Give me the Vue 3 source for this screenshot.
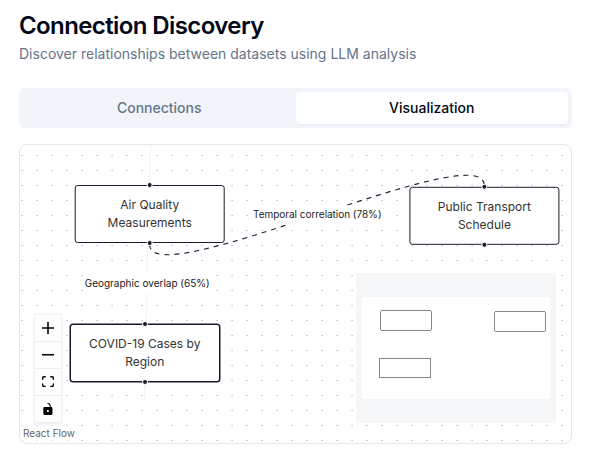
<script setup>
const nodes = [
  { id: 'air', lines: ['Air Quality', 'Measurements'] },
  { id: 'transport', lines: ['Public Transport', 'Schedule'] },
  { id: 'covid', lines: ['COVID-19 Cases by', 'Region'] },
]
</script>

<template>
  <main class="page">
    <h1>Connection Discovery</h1>
    <p class="subtitle">Discover relationships between datasets using LLM analysis</p>
    <div class="tabs" role="tablist">
      <button role="tab">Connections</button>
      <button role="tab" class="active">Visualization</button>
    </div>
    <section class="flow">
      <svg class="layer" width="551" height="298" viewBox="20 145 551 298">
        <defs>
          <pattern id="dots" x="21" y="155" width="15" height="15" patternUnits="userSpaceOnUse">
            <rect x=".3" width="1.7" height="1" fill="#c4c4c6" />
          </pattern>
        </defs>
        <rect x="20" y="145" width="551" height="298" fill="url(#dots)" />
        <path class="faint thin" d="M150.500 145V153" />
        <path class="faint" d="M149.700 153V183M144.700 384V401.500M147.700 245L146.200 323" />
        <path class="dashed" d="M149.700 244.500C149.700 296 484.300 134 484.300 185.500" />
        <rect x="251" y="205.500" width="132" height="19" fill="#fff" />
        <rect x="83" y="273.500" width="128" height="20" fill="#fff" />
        <text x="317.300" y="218" text-anchor="middle" textLength="128.500">Temporal correlation (78%)</text>
        <text x="147.200" y="287" text-anchor="middle" textLength="125">Geographic overlap (65%)</text>
      </svg>
      <div v-for="node in nodes" :key="node.id" class="node" :class="node.id">
        <i class="handle top"></i>
        <span v-for="line in node.lines" :key="line">{{ line }}</span>
        <i class="handle bottom"></i>
      </div>
      <svg class="minimap" width="200" height="150" viewBox="356 273 200 150">
        <rect x="356" y="273" width="200" height="150" fill="#f4f6f8" />
        <rect x="362" y="297" width="188" height="102" fill="#fff" />
        <g fill="#fff" stroke="#858585" shape-rendering="crispEdges">
          <rect x="380.500" y="310.500" width="51" height="20" rx="1.700" />
          <rect x="494.500" y="311.500" width="51" height="20" rx="1.700" />
          <rect x="379.500" y="358.500" width="51" height="19" rx="1" />
        </g>
      </svg>
      <div class="controls">
        <button aria-label="Zoom in">
          <svg viewBox="0 0 32 32"><path d="M32 18.133H18.133V32h-4.266V18.133H0v-4.266h13.867V0h4.266v13.867H32z" /></svg>
        </button>
        <button aria-label="Zoom out">
          <svg viewBox="0 0 32 5"><path d="M0 0h32v4.200H0z" /></svg>
        </button>
        <button aria-label="Fit view">
          <svg viewBox="0 0 32 30"><path d="M3.692 4.630c0-.53.400-.938.939-.938h5.215V0H4.708C2.130 0 0 2.054 0 4.630v5.216h3.692V4.631zM27.354 0h-5.200v3.692h5.170c.53 0 .984.400.984.939v5.215H32V4.631A4.624 4.624 0 0027.354 0zm.954 24.830c0 .532-.400.940-.939.940h-5.215v3.768h5.215c2.577 0 4.631-2.130 4.631-4.707v-5.139h-3.692v5.139zm-23.677.940c-.531 0-.939-.400-.939-.940v-5.138H0v5.139c0 2.577 2.130 4.707 4.708 4.707h5.138V25.770H4.631z" /></svg>
        </button>
        <button aria-label="Toggle interactivity">
          <svg viewBox="0 0 25 32"><path d="M21.333 10.667H19.810V7.619C19.810 3.429 16.380 0 12.190 0c-4.114 1.828-1.370 2.133.305 2.438 1.676.305 4.420 2.590 4.420 5.181v3.048H3.047A3.056 3.056 0 000 13.714v15.238A3.056 3.056 0 003.048 32h18.285a3.056 3.056 0 003.048-3.048V13.714a3.056 3.056 0 00-3.048-3.047zM12.190 24.533a3.056 3.056 0 01-3.047-3.047 3.056 3.056 0 013.047-3.048 3.056 3.056 0 013.048 3.048 3.056 3.056 0 01-3.048 3.047z" /></svg>
        </button>
      </div>
      <div class="attribution">React Flow</div>
    </section>
  </main>
</template>

<style>
body { background: #fff; }
</style>

<style scoped>
* { box-sizing: border-box; }
.page { padding: 10px 23px 0 19px; font-family: Inter, sans-serif; color: #020817; }
h1 { margin: 0; font-size: 24px; line-height: 32px; font-weight: 600; letter-spacing: -.6px; }
.subtitle { margin: 2px 0 0; font-size: 14px; line-height: 20px; color: #64748b; white-space: nowrap; }
.tabs { display: grid; grid-template-columns: 1fr 1fr; height: 40px; margin-top: 24px; padding: 4px; border-radius: 6px; background: #f1f5f9; }
.tabs button { border: 0; padding: 0; border-radius: 4px; background: transparent; font: 500 14px/20px Inter, sans-serif; color: #64748b; }
.tabs .active { background: #fff; color: #020817; box-shadow: 0 1px 2px rgba(0, 0, 0, .05); }
.flow { position: relative; height: 300px; margin-top: 16px; border: 1px solid #e2e8f0; border-radius: 8px; overflow: hidden; }
.layer { display: block; }
.layer text { font: 10px Inter, sans-serif; fill: #222; }
.faint { fill: none; stroke: #f1f5fa; stroke-width: 1.5; }
.thin { stroke-width: 1; }
.dashed { fill: none; stroke: #22223b; stroke-width: 1.15; stroke-dasharray: 5; }
.node { position: absolute; display: flex; flex-direction: column; align-items: center; justify-content: center; width: 150px; height: 58px; border: 1px solid #1a192b; border-radius: 3px; background: #fff; font-size: 12px; line-height: 18px; color: #333; }
.air { left: 55px; top: 40px; transform: translateX(-.3px); }
.transport { left: 389px; top: 42px; transform: translate(.4px, -.2px); }
.covid { left: 49.500px; top: 178.500px; width: 150.500px; border-width: 1.5px; box-shadow: 0 0 0 .5px #1a192b; }
.handle { position: absolute; left: 50%; width: 6px; height: 6px; border: 1px solid #fff; border-radius: 50%; background: #1a192b; transform: translateX(-50%); }
.top { top: -4px; }
.bottom { bottom: -4px; }
.minimap { position: absolute; right: 15px; bottom: 20px; }
.controls { position: absolute; left: 15px; top: 170px; width: 26px; box-shadow: 0 0 2px 1px rgba(0, 0, 0, .08); }
.controls button { display: flex; align-items: center; justify-content: center; width: 26px; height: 27px; padding: 5px; border: 0; border-bottom: 1px solid #eee; background: #fefefe; }
.controls svg { width: 12px; max-height: 12px; }
.attribution { position: absolute; left: 0; bottom: 2px; padding: 2px 3px; background: rgba(255, 255, 255, .5); font-size: 10px; line-height: 12px; color: #666; }
</style>
